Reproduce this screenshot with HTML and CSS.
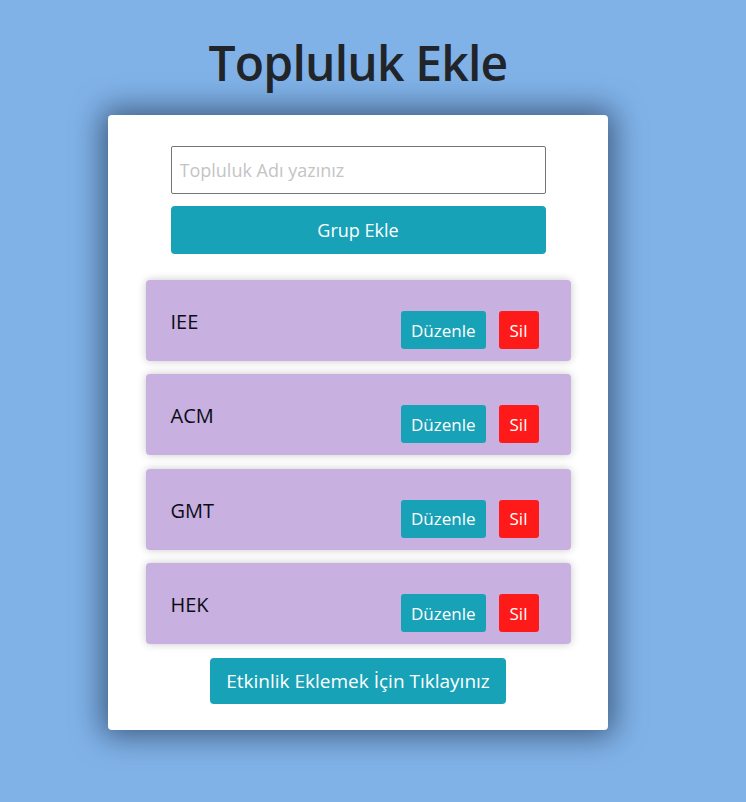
FILE: index.html
```html
<!DOCTYPE html>
<html lang="tr">
<head>
<meta charset="utf-8">
<title>Topluluk Ekle</title>
<link rel="stylesheet" href="styles.css">
</head>
<body>
<main class="page">
  <h1 class="title">Topluluk Ekle</h1>
  <section class="card">
    <form class="add-form">
      <input class="name-input" type="text" placeholder="Topluluk Adı yazınız">
      <button class="btn btn-info btn-block" type="button">Grup Ekle</button>
    </form>
    <ul class="list">
      <li class="item"><span class="item-name">IEE</span><div class="actions"><button class="btn btn-info btn-sm" type="button">Düzenle</button><button class="btn btn-danger btn-sm" type="button">Sil</button></div></li>
      <li class="item"><span class="item-name">ACM</span><div class="actions"><button class="btn btn-info btn-sm" type="button">Düzenle</button><button class="btn btn-danger btn-sm" type="button">Sil</button></div></li>
      <li class="item"><span class="item-name">GMT</span><div class="actions"><button class="btn btn-info btn-sm" type="button">Düzenle</button><button class="btn btn-danger btn-sm" type="button">Sil</button></div></li>
      <li class="item"><span class="item-name">HEK</span><div class="actions"><button class="btn btn-info btn-sm" type="button">Düzenle</button><button class="btn btn-danger btn-sm" type="button">Sil</button></div></li>
    </ul>
    <div class="footer">
      <button class="btn btn-info btn-event" type="button">Etkinlik Eklemek İçin Tıklayınız</button>
    </div>
  </section>
</main>
</body>
</html>
```

FILE: styles.css
```css
* { box-sizing: border-box; }
html, body { margin: 0; padding: 0; }
body {
  background: #80b2e8;
  font-family: "Open Sans", "Noto Sans", sans-serif;
  color: #212529;
  min-height: 802px;
}
.page {
  width: 500px;
  margin-left: 108px;
  padding-top: 26px;
}
.title {
  margin: 0 0 15px;
  text-align: center;
  font-size: 48px;
  font-weight: 600;
  line-height: 74px;
  color: #212529;
  letter-spacing: -0.8px;
}
.card {
  background: #fff;
  border-radius: 4px;
  box-shadow: 0 0 30px 6px rgba(20, 35, 60, 0.6);
  padding: 31px 0 26px;
}
.add-form {
  width: 375px;
  margin: 0 auto;
  display: flex;
  flex-direction: column;
  gap: 12px;
}
.name-input {
  height: 48px;
  border: 1px solid #767676;
  border-radius: 2px;
  padding: 0 8px;
  font-family: inherit;
  font-size: 18px;
  color: #333;
}
.name-input::placeholder { color: #c4c4c4; }
.btn {
  border: 0;
  border-radius: 4px;
  color: #fff;
  font-family: inherit;
  cursor: pointer;
}
.btn-info { background: #17a2b8; }
.btn-danger { background: #ff1a1a; }
.btn-block {
  height: 48px;
  font-size: 18px;
}
.list {
  list-style: none;
  margin: 26px auto 0;
  padding: 0;
  width: 425px;
  display: flex;
  flex-direction: column;
  gap: 13.4px;
}
.item {
  height: 81px;
  background: #c8b0e1;
  border-radius: 4px;
  box-shadow: 0 0 8px rgba(0, 0, 0, 0.22);
  display: flex;
  justify-content: space-between;
  align-items: flex-start;
  padding: 0 32px 0 25px;
}
.item-name {
  margin-top: 27px;
  font-size: 20px;
  line-height: 30px;
  color: #0c0c14;
}
.actions {
  margin-top: 31px;
  display: flex;
  gap: 13px;
}
.btn-sm {
  height: 38px;
  padding: 0 10px;
  font-size: 17px;
  border-radius: 3px;
}
.btn-sm.btn-danger {
  min-width: 40px;
  padding: 0 11px;
}
.footer {
  display: flex;
  justify-content: center;
  margin-top: 14px;
}
.btn-event {
  height: 46px;
  padding: 0 16px;
  font-size: 19px;
}
```
